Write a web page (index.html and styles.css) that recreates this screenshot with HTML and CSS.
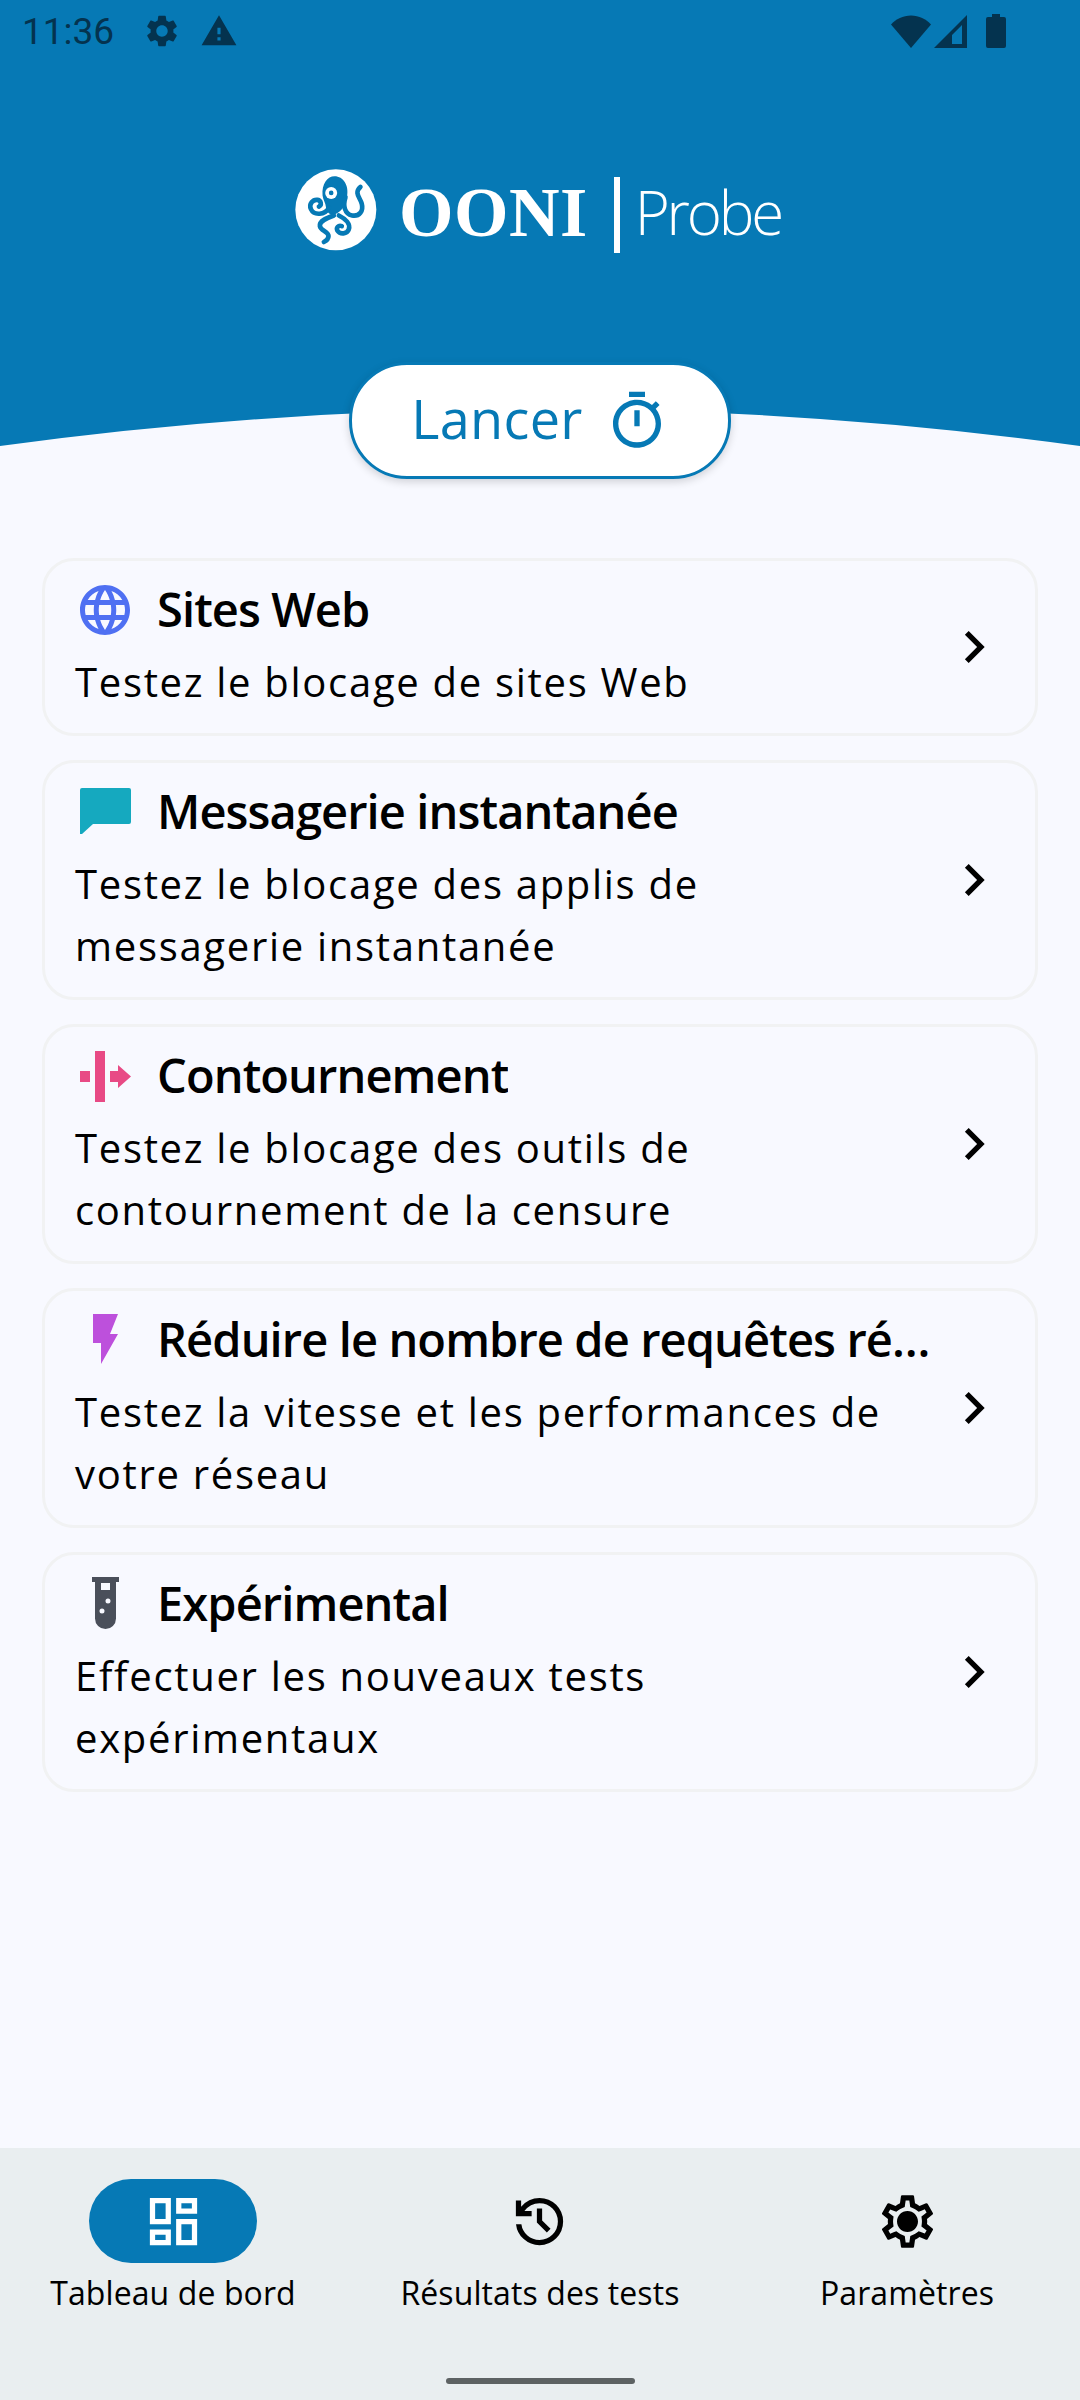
FILE: index.html
```html
<!DOCTYPE html>
<html lang="fr">
<head>
    <meta charset="UTF-8">
    <meta name="viewport" content="width=device-width, initial-scale=1.0">
    <title>OONI Probe</title>
    <link rel="stylesheet" href="styles.css">
</head>
<body>

    <header class="hero">
        <div class="status-bar">
            <span class="clock">11:36</span>
            <svg class="status-icon" viewBox="0 0 24 24"><path d="M19.14 12.94c.04-.3.06-.61.06-.94 0-.32-.02-.64-.07-.94l2.03-1.58c.18-.14.23-.41.12-.61l-1.92-3.32c-.12-.22-.37-.29-.59-.22l-2.39.96c-.5-.38-1.03-.7-1.62-.94l-.36-2.54c-.04-.24-.24-.41-.48-.41h-3.84c-.24 0-.43.17-.47.41l-.36 2.54c-.59.24-1.13.57-1.62.94l-2.39-.96c-.22-.08-.47 0-.59.22L2.74 8.87c-.12.21-.08.47.12.61l2.03 1.58c-.05.3-.09.63-.09.94s.02.64.07.94l-2.03 1.58c-.18.14-.23.41-.12.61l1.92 3.32c.12.22.37.29.59.22l2.39-.96c.5.38 1.03.7 1.62.94l.36 2.54c.05.24.24.41.48.41h3.84c.24 0 .44-.17.47-.41l.36-2.54c.59-.24 1.13-.56 1.62-.94l2.39.96c.22.08.47 0 .59-.22l1.92-3.32c.12-.22.07-.47-.12-.61l-2.01-1.58zM12 15.6c-1.98 0-3.6-1.62-3.6-3.6s1.62-3.6 3.6-3.6 3.6 1.62 3.6 3.6-1.62 3.6-3.6 3.6z"/></svg>
            <svg class="status-icon" viewBox="0 0 24 24"><path d="M1 21h22L12 2 1 21zm12-3h-2v-2h2v2zm0-4h-2v-4h2v4z"/></svg>
            <div class="status-right">
                <svg class="wifi" viewBox="0 0 40 33"><path d="M20 33 0 9.5C5 4 12 .5 20 .5S35 4 40 9.5z"/></svg>
                <svg class="signal" viewBox="0 0 33 33"><path fill-rule="evenodd" d="M33 0v33H0zM28 10 18 20v9h10z"/></svg>
                <svg class="battery" viewBox="0 0 20 34"><path d="M6 0h8v3h4a2 2 0 0 1 2 2v27a2 2 0 0 1-2 2H2a2 2 0 0 1-2-2V5a2 2 0 0 1 2-2h4z"/></svg>
            </div>
        </div>

        <div class="logo">
            <svg class="logo-mark" viewBox="48 57 247 243">
                <circle cx="171" cy="178" r="122" fill="#fff"/>
                <path class="octo-fill" d="M131 135c-3-35 15-58 36-58 27 0 44 28 38 60-4 22-12 44-36 54-16 7-26-8-28-22-1-12-8-20-10-34z"/>
                <circle cx="157" cy="127" r="18" fill="#fff"/>
                <circle cx="157" cy="127" r="7" class="octo-fill"/>
                <g class="octo-line">
                    <path d="M150 172c-12 22-45 24-54 4-7-16 6-30 20-28 11 2 13 16 4 20"/>
                    <path d="M200 140c-8 25-3 50 20 55 22 4 35-14 29-36-5-18-24-32-4-50"/>
                    <path d="M165 195c-22 8-44 16-42 32 2 14 26 16 26 30 0 10-8 15-14 18"/>
                    <path d="M180 195c20 10 36 26 30 42-5 14-26 16-34 4-5-9 3-18 13-14"/>
                </g>
            </svg>
            <span class="logo-ooni">OONI</span>
            <span class="logo-bar"></span>
            <span class="logo-probe">Probe</span>
        </div>

        <svg class="curve" viewBox="0 0 1080 40" preserveAspectRatio="none"><path d="M0 37Q540-37 1080 37V40H0z"/></svg>

        <button class="start-btn">
            <span class="start-label">Lancer</span>
            <svg viewBox="0 0 24 24"><path d="M15 1H9v2h6V1zm-4 13h2V8h-2v6zm8.03-6.61l1.42-1.42c-.43-.51-.9-.99-1.41-1.41l-1.42 1.42C16.07 4.74 14.12 4 12 4c-4.97 0-9 4.03-9 9s4.02 9 9 9 9-4.03 9-9c0-2.12-.74-4.07-1.97-5.61zM12 20c-3.87 0-7-3.13-7-7s3.13-7 7-7 7 3.13 7 7-3.13 7-7 7z"/></svg>
        </button>
    </header>

    <main class="cards">
        <article class="card">
            <div class="card-body">
                <div class="card-head">
                    <span class="card-icon">
                        <svg viewBox="0 0 24 24" fill="#4f70f2"><path d="M11.99 2C6.47 2 2 6.48 2 12s4.47 10 9.99 10C17.52 22 22 17.52 22 12S17.52 2 11.99 2zm6.93 6h-2.95c-.32-1.25-.78-2.45-1.38-3.56 1.84.63 3.37 1.91 4.33 3.56zM12 4.04c.83 1.2 1.48 2.53 1.91 3.96h-3.82c.43-1.43 1.08-2.76 1.91-3.96zM4.26 14C4.1 13.36 4 12.69 4 12s.1-1.36.26-2h3.38c-.08.66-.14 1.32-.14 2s.06 1.34.14 2H4.26zm.82 2h2.95c.32 1.25.78 2.45 1.38 3.56-1.84-.63-3.37-1.9-4.33-3.56zm2.95-8H5.08c.96-1.66 2.49-2.93 4.33-3.56C8.81 5.55 8.35 6.75 8.03 8zM12 19.96c-.83-1.2-1.48-2.53-1.91-3.96h3.82c-.43 1.43-1.08 2.76-1.91 3.96zM14.34 14H9.66c-.09-.66-.16-1.32-.16-2s.07-1.35.16-2h4.68c.09.65.16 1.32.16 2s-.07 1.34-.16 2zm.25 5.56c.6-1.11 1.06-2.31 1.38-3.56h2.95c-.96 1.65-2.49 2.93-4.33 3.56zM16.36 14c.08-.66.14-1.32.14-2s-.06-1.34-.14-2h3.38c.16.64.26 1.31.26 2s-.1 1.36-.26 2h-3.38z"/></svg>
                    </span>
                    <h2>Sites Web</h2>
                </div>
                <p>Testez le blocage de sites Web</p>
            </div>
            <svg class="chevron" viewBox="0 0 24 24"><path d="M10 6 8.59 7.41 13.17 12l-4.58 4.59L10 18l6-6z"/></svg>
        </article>

        <article class="card">
            <div class="card-body">
                <div class="card-head">
                    <span class="card-icon">
                        <svg viewBox="0 0 51 46" class="icon-chat" fill="#15a9bf"><path d="M2 0h47a2 2 0 0 1 2 2v32a2 2 0 0 1-2 2H13L2 46H0V2a2 2 0 0 1 2-2z"/></svg>
                    </span>
                    <h2>Messagerie instantanée</h2>
                </div>
                <p>Testez le blocage des applis de messagerie instantanée</p>
            </div>
            <svg class="chevron" viewBox="0 0 24 24"><path d="M10 6 8.59 7.41 13.17 12l-4.58 4.59L10 18l6-6z"/></svg>
        </article>

        <article class="card">
            <div class="card-body">
                <div class="card-head">
                    <span class="card-icon">
                        <svg viewBox="0 0 51 51" class="icon-bypass" fill="#e84a85"><path d="M15 0h10v51H15zM0 20h10v11H0zM30 20h8v-6l13 11.500-13 11.500v-6h-8z"/></svg>
                    </span>
                    <h2>Contournement</h2>
                </div>
                <p>Testez le blocage des outils de contournement de la censure</p>
            </div>
            <svg class="chevron" viewBox="0 0 24 24"><path d="M10 6 8.59 7.41 13.17 12l-4.58 4.59L10 18l6-6z"/></svg>
        </article>

        <article class="card">
            <div class="card-body">
                <div class="card-head">
                    <span class="card-icon">
                        <svg viewBox="0 0 25 50" class="icon-bolt" fill="#bd50dc"><path d="M0 0h25l-8 20h8L8 50V29H0z"/></svg>
                    </span>
                    <h2>Réduire le nombre de requêtes réseau</h2>
                </div>
                <p>Testez la vitesse et les performances de votre réseau</p>
            </div>
            <svg class="chevron" viewBox="0 0 24 24"><path d="M10 6 8.59 7.41 13.17 12l-4.58 4.59L10 18l6-6z"/></svg>
        </article>

        <article class="card">
            <div class="card-body">
                <div class="card-head">
                    <span class="card-icon">
                        <svg viewBox="0 0 27 52" class="icon-flask"><path fill="#4a4f5a" fill-rule="evenodd" d="M0 0h27v5h-3v36.500a10.500 10.500 0 0 1-21 0V5H0zM9 6v7h9V6zM16 21.500a2.500 2.500 0 1 0 0 5 2.500 2.500 0 0 0 0-5zM10 31.500a2.500 2.500 0 1 0 0 5 2.500 2.500 0 0 0 0-5z"/></svg>
                    </span>
                    <h2>Expérimental</h2>
                </div>
                <p>Effectuer les nouveaux tests expérimentaux</p>
            </div>
            <svg class="chevron" viewBox="0 0 24 24"><path d="M10 6 8.59 7.41 13.17 12l-4.58 4.59L10 18l6-6z"/></svg>
        </article>
    </main>

    <nav class="bottom-nav">
        <div class="nav-items">
            <div class="nav-item active">
                <span class="nav-pill">
                    <svg viewBox="0 0 24 24"><path d="M19 5v2h-4V5h4M9 5v6H5V5h4m10 8v6h-4v-6h4M9 17v2H5v-2h4M21 3h-8v6h8V3zM11 3H3v10h8V3zm10 8h-8v10h8V11zm-10 4H3v6h8v-6z"/></svg>
                </span>
                <span class="nav-label">Tableau de bord</span>
            </div>
            <div class="nav-item">
                <span class="nav-pill">
                    <svg class="icon-history" viewBox="0 0 24 24"><path d="M12 21q-3.450 0-6.013-2.288T3.050 13H5.100q.35 2.600 2.313 4.300T12 19q2.925 0 4.963-2.038T19 12q0-2.925-2.037-4.963T12 5q-1.725 0-3.225.8T6.250 8H9v2H3V4h2v2.350q1.275-1.600 3.113-2.475T12 3q3.750 0 6.375 2.625T21 12q0 3.750-2.625 6.375T12 21zm2.800-4.800L11 12.400V7h2v4.600l3.200 3.200-1.400 1.400z"/></svg>
                </span>
                <span class="nav-label">Résultats des tests</span>
            </div>
            <div class="nav-item">
                <span class="nav-pill">
                    <svg viewBox="0 0 24 24"><path d="M19.430 12.980c.04-.32.07-.64.07-.98 0-.34-.03-.66-.07-.98l2.110-1.650c.19-.15.24-.42.12-.64l-2-3.460c-.09-.16-.26-.25-.44-.25-.06 0-.12.01-.17.03l-2.490 1c-.52-.4-1.080-.73-1.690-.98l-.38-2.650C14.460 2.180 14.250 2 14 2h-4c-.25 0-.46.18-.49.42l-.38 2.650c-.61.25-1.170.59-1.690.98l-2.490-1c-.06-.02-.12-.03-.18-.03-.17 0-.34.09-.43.25l-2 3.460c-.13.22-.07.49.12.64l2.110 1.650c-.04.32-.07.65-.07.98 0 .33.03.66.07.98l-2.110 1.650c-.19.15-.24.42-.12.64l2 3.460c.09.16.26.25.44.25.06 0 .12-.01.17-.03l2.490-1c.52.4 1.080.73 1.690.98l.38 2.650c.03.24.24.42.49.42h4c.25 0 .46-.18.49-.42l.38-2.650c.61-.25 1.170-.59 1.690-.98l2.490 1c.06.02.12.03.18.03.17 0 .34-.09.43-.25l2-3.460c.12-.22.07-.49-.12-.64l-2.110-1.650zm-1.980-1.710c.04.31.05.52.05.73 0 .21-.02.43-.05.73l-.14 1.130.89.7 1.080.84-.7 1.210-1.270-.51-1.040-.42-.9.68c-.43.32-.84.56-1.250.73l-1.060.43-.16 1.130-.2 1.350h-1.400l-.19-1.350-.16-1.130-1.060-.43c-.43-.18-.83-.41-1.230-.71l-.91-.7-1.060.43-1.270.51-.7-1.210 1.080-.84.89-.7-.14-1.130c-.03-.31-.05-.54-.05-.74s.02-.43.05-.73l.14-1.130-.89-.7-1.080-.84.7-1.210 1.270.51 1.040.42.9-.68c.43-.32.84-.56 1.250-.73l1.060-.43.16-1.130.2-1.350h1.390l.19 1.350.16 1.130 1.060.43c.43.18.83.41 1.230.71l.91.7 1.060-.43 1.270-.51.7 1.210-1.070.85-.89.7.14 1.130zM12 8c-2.210 0-4 1.790-4 4s1.790 4 4 4 4-1.790 4-4-1.790-4-4-4z"/></svg>
                </span>
                <span class="nav-label">Paramètres</span>
            </div>
        </div>
        <div class="home-bar"></div>
    </nav>

</body>
</html>
```

FILE: styles.css
```css
body {
    margin: 0;
    height: 2400px;
    display: flex;
    flex-direction: column;
    background: #f8f9ff;
    font-family: "Open Sans", sans-serif;
    color: #000;
    overflow: hidden;
}

/* top blue area */
.hero {
    position: relative;
    display: flex;
    flex-direction: column;
    background: #0679b5;
}
.status-bar {
    display: flex;
    align-items: center;
    gap: 19px;
    height: 62px;
    padding: 0 74px 0 22px;
    fill: #04334f;
    color: #04334f;
}
.clock {
    font-family: Roboto, sans-serif;
    font-size: 37px;
    margin-right: 10px;
}
.status-icon {
    width: 38px;
    height: 38px;
}
.status-right {
    margin-left: auto;
    display: flex;
    gap: 3px;
    align-items: center;
}
.wifi {
    width: 40px;
    height: 33px;
}
.signal {
    width: 33px;
    height: 33px;
}
.battery {
    width: 20px;
    height: 34px;
    margin-left: 16px;
}

.logo {
    display: flex;
    align-items: center;
    justify-content: center;
    height: 90px;
    margin-top: 103px;
    padding-right: 4px;
    color: #fff;
}
.logo-mark {
    width: 82px;
    height: 82px;
}
.octo-fill {
    fill: #0679b5;
}
.octo-line {
    fill: none;
    stroke: #0679b5;
    stroke-width: 14;
    stroke-linecap: round;
}
.logo-ooni {
    font-family: "Liberation Serif", serif;
    font-weight: 700;
    font-size: 70px;
    letter-spacing: 0.5px;
    margin-left: 22px;
    padding-top: 6px;
}
.logo-bar {
    width: 6px;
    height: 76px;
    margin: 10px 15px 0 26px;
    background: #fff;
}
.logo-probe {
    font-family: "Open Sans", sans-serif;
    font-weight: 300;
    font-size: 60px;
    letter-spacing: -3.2px;
    padding-top: 4px;
}

.curve {
    position: absolute;
    left: 0;
    bottom: 0;
    width: 100%;
    height: 40px;
    fill: #f8f9ff;
}
.start-btn {
    position: relative;
    align-self: center;
    display: flex;
    align-items: center;
    justify-content: center;
    gap: 22px;
    width: 382px;
    height: 117px;
    margin: 107px 0 -30px;
    background: #fff;
    border: 3px solid #0679b5;
    border-radius: 58px;
    box-shadow: 0 3px 8px rgba(0, 0, 0, 0.16);
    color: #0679b5;
    fill: #0679b5;
    font-family: "Open Sans", sans-serif;
    font-size: 54px;
    letter-spacing: 0.3px;
    padding: 0;
}
.start-label {
    padding-bottom: 5px;
}
.start-btn svg {
    width: 64px;
    height: 64px;
}

/* test cards */
.cards {
    display: flex;
    flex-direction: column;
    gap: 24px;
    padding: 109px 42px 0;
}
.card {
    display: flex;
    align-items: center;
    background: #f8f9ff;
    border: 3px solid #f1f2f3;
    border-radius: 32px;
    padding: 19px 29px 20px 30px;
}
.card-body {
    flex: 1;
    min-width: 0;
}
.card-head {
    display: flex;
    align-items: center;
    height: 60px;
    margin: 0 -8px 11px 0;
}
.card-icon {
    flex: none;
    display: flex;
    justify-content: center;
    align-items: center;
    width: 60px;
    height: 60px;
    margin-right: 22px;
}
.card-icon svg {
    width: 60px;
    height: 60px;
}
.card-icon .icon-chat {
    width: 51px;
    height: 46px;
    margin-bottom: 2px;
}
.card-icon .icon-bypass {
    width: 51px;
    height: 51px;
}
.card-icon .icon-bolt {
    width: 25px;
    height: 50px;
    margin-bottom: 2px;
}
.card-icon .icon-flask {
    width: 27px;
    height: 52px;
    margin-bottom: 2px;
}
.card h2 {
    margin: 0;
    padding-bottom: 3px;
    font-size: 47px;
    font-weight: 600;
    letter-spacing: -0.9px;
    white-space: nowrap;
    overflow: hidden;
    text-overflow: ellipsis;
}
.card p {
    margin: 0;
    font-size: 40px;
    line-height: 62px;
    letter-spacing: 1.7px;
}
.chevron {
    flex: none;
    width: 64px;
    height: 64px;
    margin-left: 12px;
}

/* bottom navigation */
.bottom-nav {
    margin-top: auto;
    height: 252px;
    display: flex;
    flex-direction: column;
    background: #e9eef0;
}
.nav-items {
    display: flex;
    justify-content: center;
    gap: 77px;
    padding-top: 31px;
}
.nav-item {
    width: 290px;
    display: flex;
    flex-direction: column;
    align-items: center;
}
.nav-pill {
    display: flex;
    align-items: center;
    justify-content: center;
    width: 168px;
    height: 84px;
    border-radius: 42px;
}
.active .nav-pill {
    background: #0679b5;
    fill: #fff;
}
.nav-pill svg {
    width: 63px;
    height: 63px;
}
.nav-pill .icon-history {
    margin-right: 2px;
}
.nav-label {
    margin-top: 8px;
    font-size: 32px;
    line-height: 44px;
    letter-spacing: 0.1px;
    white-space: nowrap;
}
.home-bar {
    width: 189px;
    height: 6px;
    margin: auto auto 16px;
    border-radius: 3px;
    background: #5d6263;
}
```
